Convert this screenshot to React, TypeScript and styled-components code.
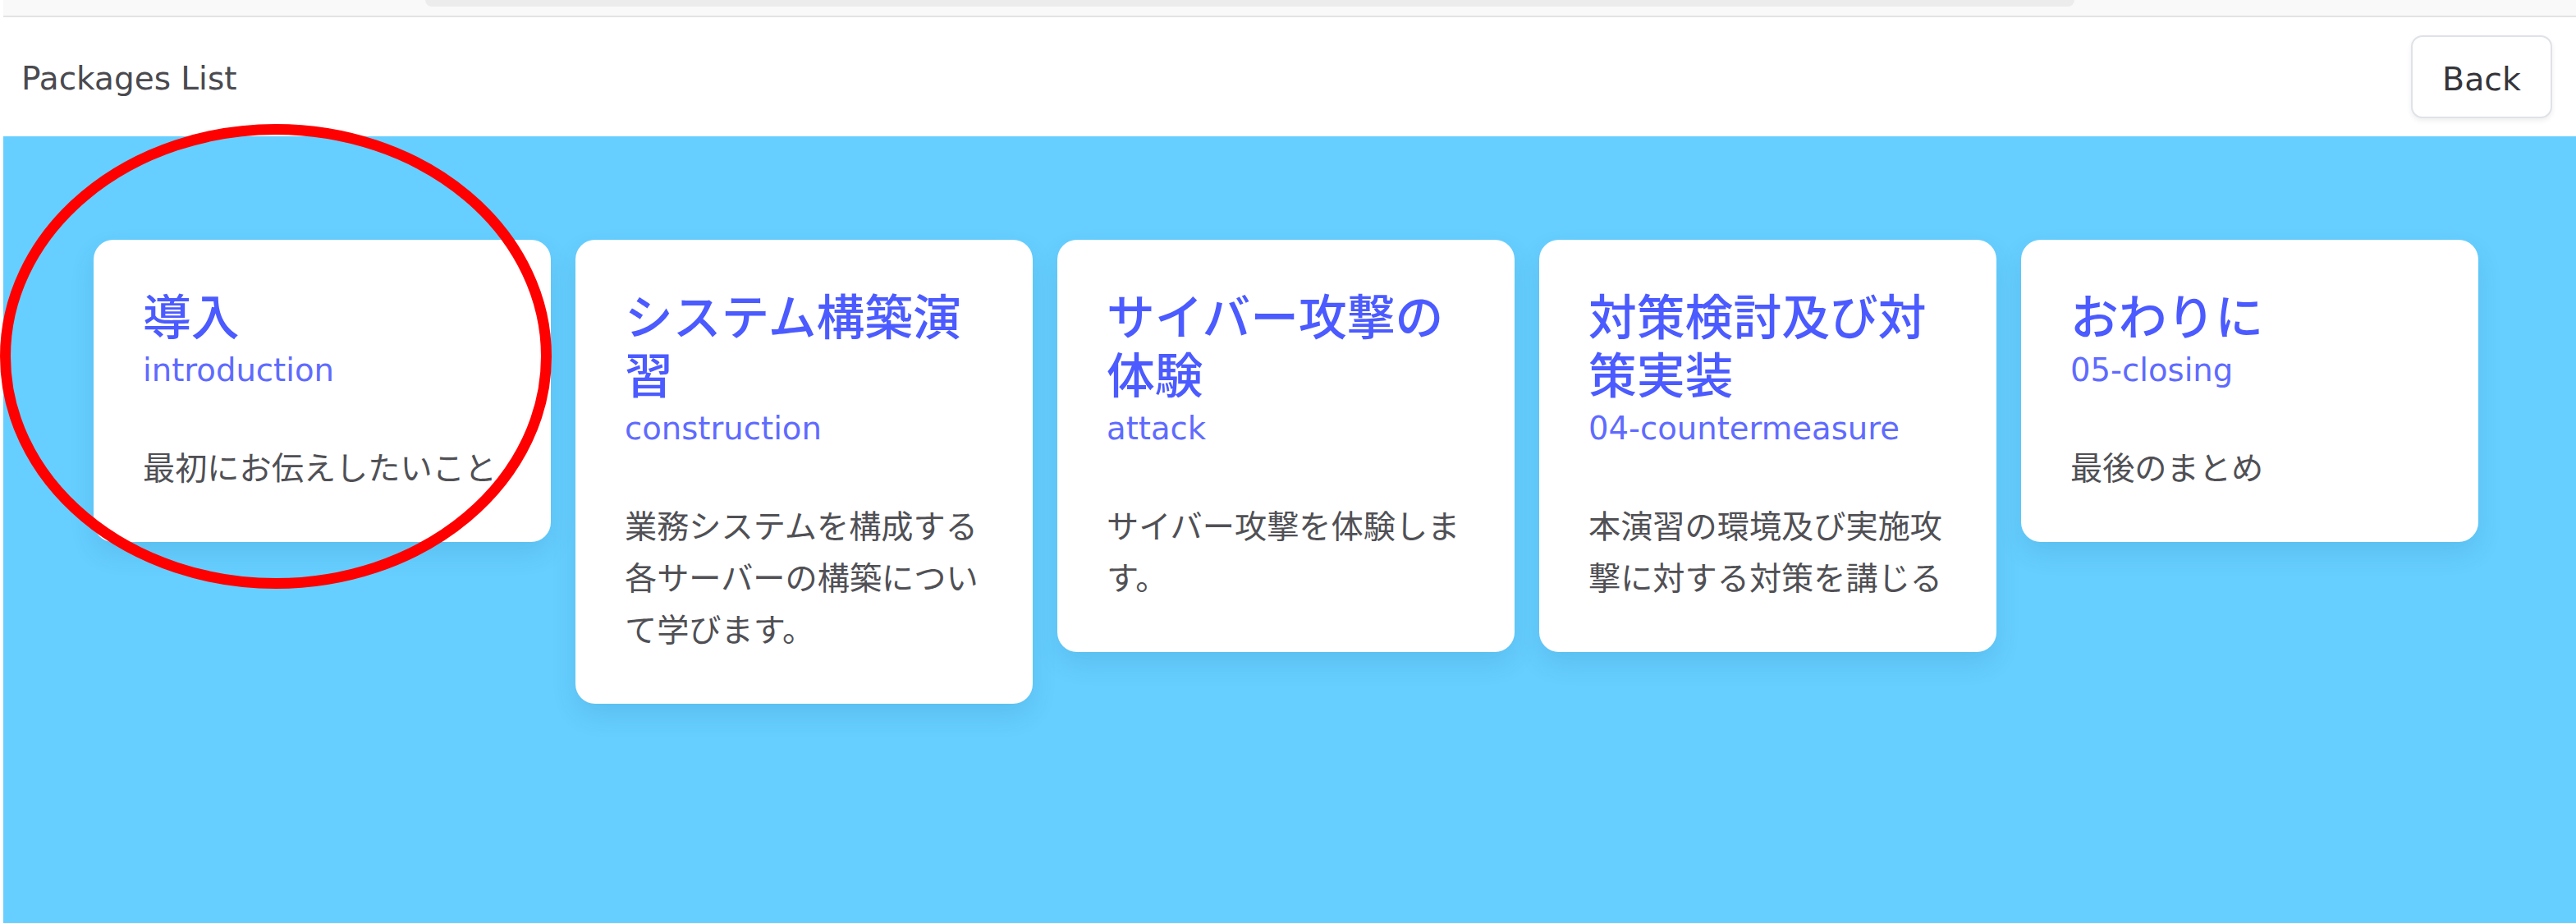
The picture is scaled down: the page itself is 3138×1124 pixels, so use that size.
import React from "react";
import styled, { createGlobalStyle } from "styled-components";

const Global = createGlobalStyle`
  html, body {
    margin: 0;
    padding: 0;
    background: #ffffff;
  }
  body {
    font-family: "DejaVu Sans", "Noto Sans CJK JP", sans-serif;
  }
  * { box-sizing: border-box; }
`;

const Page = styled.div`
  position: relative;
  margin-left: 4px;
  min-height: 1124px;
  display: flex;
  flex-direction: column;
  background: #ffffff;
`;

const ChromeStrip = styled.div`
  height: 21px;
  background: #f9f9f9;
  border-bottom: 2px solid #e3e3e3;
  padding-left: 514px;
`;

const AddressTab = styled.div`
  width: 2009px;
  height: 8px;
  background: #ececec;
  border-radius: 0 0 9px 9px;
`;

const Header = styled.header`
  height: 145px;
  display: flex;
  align-items: center;
  justify-content: space-between;
  padding: 4px 29px 0 22px;
  background: #ffffff;
`;

const Brand = styled.div`
  font-family: "DejaVu Sans", sans-serif;
  font-size: 39px;
  color: #4a4a4f;
`;

const BackButton = styled.button`
  font-family: "DejaVu Sans", sans-serif;
  font-size: 39.5px;
  line-height: 1.5;
  color: #35353a;
  background: #ffffff;
  border: 2px solid #dfe2e8;
  border-radius: 14px;
  padding: 22px 36px 16px 36px;
  width: 172px;
  height: 101px;
  box-shadow: 0 3px 6px rgba(0, 0, 0, 0.07);
  margin-top: -4px;
`;

const Main = styled.main`
  flex: 1;
  background: #66cfff;
  padding: 126px 0 0 110px;
`;

const CardRow = styled.div`
  display: flex;
  align-items: flex-start;
  gap: 30px;
`;

const Card = styled.div`
  width: 557px;
  flex: 0 0 557px;
  background: #ffffff;
  border-radius: 24px;
  padding: 60px 60px 58px 60px;
  box-shadow: 0 14px 30px rgba(0, 70, 120, 0.12);
`;

const Title = styled.h3`
  margin: 0;
  font-family: "DejaVu Sans", "Noto Sans CJK JP", sans-serif;
  font-size: 58.8px;
  font-weight: 500;
  line-height: 71px;
  color: #4b5bff;
`;

const Slug = styled.div`
  font-family: "DejaVu Sans", sans-serif;
  font-size: 38.6px;
  line-height: 55px;
  color: #5f6bff;
  margin-bottom: 61px;
`;

const Description = styled.p`
  margin: 0;
  font-family: "DejaVu Sans", "Noto Sans CJK JP", sans-serif;
  font-size: 39.2px;
  line-height: 63px;
  color: #505055;
`;

const Annotation = styled.svg`
  position: absolute;
  left: -4px;
  top: 0;
  width: 700px;
  height: 740px;
  pointer-events: none;
`;

type Pkg = { title: string; slug: string; desc: string };

const packages: Pkg[] = [
  { title: "導入", slug: "introduction", desc: "最初にお伝えしたいこと" },
  {
    title: "システム構築演習",
    slug: "construction",
    desc: "業務システムを構成する各サーバーの構築について学びます。",
  },
  { title: "サイバー攻撃の体験", slug: "attack", desc: "サイバー攻撃を体験します。" },
  {
    title: "対策検討及び対策実装",
    slug: "04-countermeasure",
    desc: "本演習の環境及び実施攻撃に対する対策を講じる",
  },
  { title: "おわりに", slug: "05-closing", desc: "最後のまとめ" },
];

export default function App() {
  return (
    <>
      <Global />
      <Page>
        <ChromeStrip>
          <AddressTab />
        </ChromeStrip>
        <Header>
          <Brand>Packages List</Brand>
          <BackButton>Back</BackButton>
        </Header>
        <Main>
          <CardRow>
            {packages.map((p) => (
              <Card key={p.slug}>
                <Title>{p.title}</Title>
                <Slug>{p.slug}</Slug>
                <Description>{p.desc}</Description>
              </Card>
            ))}
          </CardRow>
        </Main>
        <Annotation viewBox="0 0 700 740">
          <ellipse
            cx="336"
            cy="434"
            rx="329.5"
            ry="276.5"
            fill="none"
            stroke="#ff0000"
            strokeWidth="13"
          />
        </Annotation>
      </Page>
    </>
  );
}
